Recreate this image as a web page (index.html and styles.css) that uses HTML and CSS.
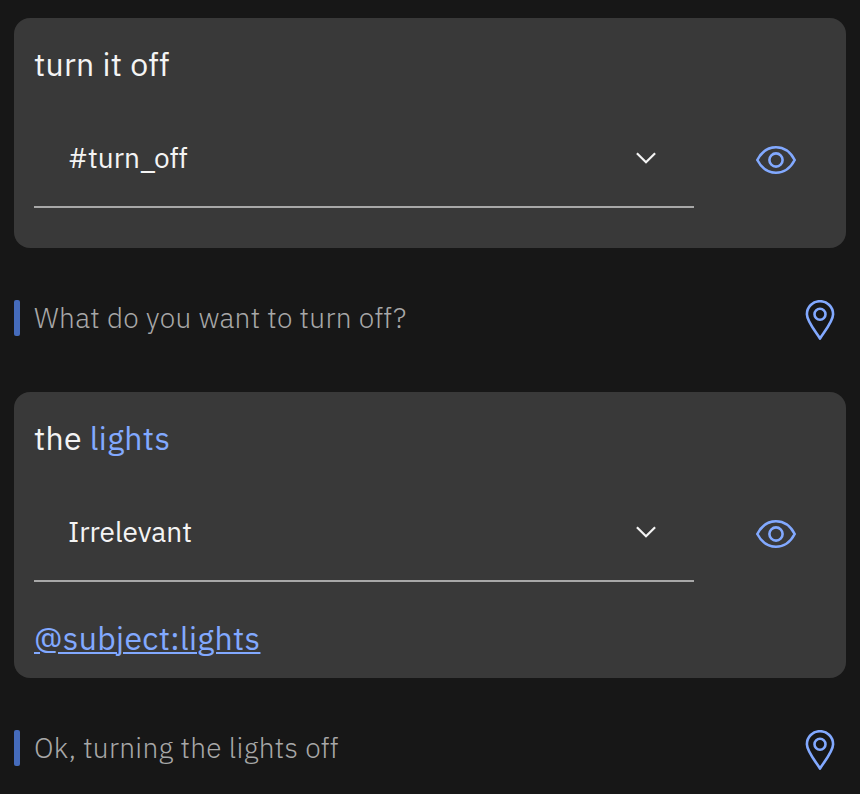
FILE: index.html
```html
<!DOCTYPE html>
<html lang="en">
<head>
<meta charset="utf-8">
<title>Conversation</title>
<link rel="stylesheet" href="styles.css">
</head>
<body>
<main class="chat">
  <section class="card">
    <p class="utterance">turn it off</p>
    <div class="intent">
      <div class="select"><span class="value">#turn_off</span>
        <svg class="chevron" viewBox="0 0 20 12"><path d="M.9 1.3 10 10.3l9.100-9"/></svg>
      </div>
      <svg class="eye" viewBox="0 0 40 28"><path d="M1.300 14C5 7 11.500 1.300 20 1.300S35 7 38.700 14C35 21 28.500 26.700 20 26.700S5 21 1.300 14Z"/><circle cx="20" cy="14" r="6.600"/></svg>
    </div>
  </section>
  <div class="reply"><span class="bar"></span><p>What do you want to turn off?</p>
    <svg class="pin" viewBox="0 0 30 40"><path d="M15 38.600C11.500 32.800 1.900 21.500 1.900 14.300a13.100 13.100 0 0 1 26.200 0C28.100 21.500 18.500 32.800 15 38.600Z"/><circle cx="15" cy="14.300" r="5.500"/></svg>
  </div>
  <section class="card card-tall">
    <p class="utterance">the <span class="entity">lights</span></p>
    <div class="intent">
      <div class="select"><span class="value">Irrelevant</span>
        <svg class="chevron" viewBox="0 0 20 12"><path d="M.9 1.3 10 10.3l9.100-9"/></svg>
      </div>
      <svg class="eye" viewBox="0 0 40 28"><path d="M1.300 14C5 7 11.500 1.300 20 1.300S35 7 38.700 14C35 21 28.500 26.700 20 26.700S5 21 1.300 14Z"/><circle cx="20" cy="14" r="6.600"/></svg>
    </div>
    <a class="mention">@subject:lights</a>
  </section>
  <div class="reply"><span class="bar"></span><p>Ok, turning the lights off</p>
    <svg class="pin" viewBox="0 0 30 40"><path d="M15 38.600C11.500 32.800 1.900 21.500 1.900 14.300a13.100 13.100 0 0 1 26.200 0C28.100 21.500 18.500 32.800 15 38.600Z"/><circle cx="15" cy="14.300" r="5.500"/></svg>
  </div>
</main>
</body>
</html>
```
FILE: styles.css
```css
* { box-sizing: border-box; }
html, body { margin: 0; height: 100%; overflow: hidden; }
body { background: #171717; color: #f4f4f4; font-family: "IBM Plex Sans", "Open Sans", sans-serif; }
p { margin: 0; white-space: nowrap; }
svg { display: block; flex: none; fill: none; stroke: #82a9ff; stroke-width: 2.6; stroke-linejoin: round; }
.chat { padding: 18px 14px 0; }
.card { height: 230px; padding: 26px 20px 0; border-radius: 16px; background: #393939; }
.card-tall { height: 286px; }
.utterance { height: 42px; font-size: 32px; line-height: 40px; letter-spacing: .32px; }
.entity, .mention { color: #82a9ff; }
.intent { display: flex; align-items: center; gap: 62px; height: 96px; margin-top: 26px; }
.select { display: flex; align-items: center; justify-content: space-between; width: 660px; height: 96px; padding: 0 38px 2px 34px; border-bottom: 2px solid #a8a8a8; }
.value { font-size: 28px; line-height: 36px; }
.chevron { width: 20px; height: 12px; stroke: #f4f4f4; stroke-width: 2.2; stroke-linejoin: miter; }
.eye { width: 40px; height: 28px; }
.mention { display: block; width: max-content; margin-top: 36px; font-size: 32px; line-height: 40px; letter-spacing: .32px; text-decoration: underline; text-decoration-thickness: 2px; text-underline-offset: 2px; }
.reply { display: flex; align-items: center; height: 40px; margin: 50px 11px 54px 0; }
.bar { width: 6px; height: 36px; margin-right: 14px; align-self: flex-start; margin-top: 2px; border-radius: 2px; background: #456bbb; }
.reply p { font-size: 28px; line-height: 40px; font-weight: 300; letter-spacing: .32px; color: #a8a8a8; }
.pin { width: 30px; height: 40px; margin-left: auto; margin-top: 4px; }
```
